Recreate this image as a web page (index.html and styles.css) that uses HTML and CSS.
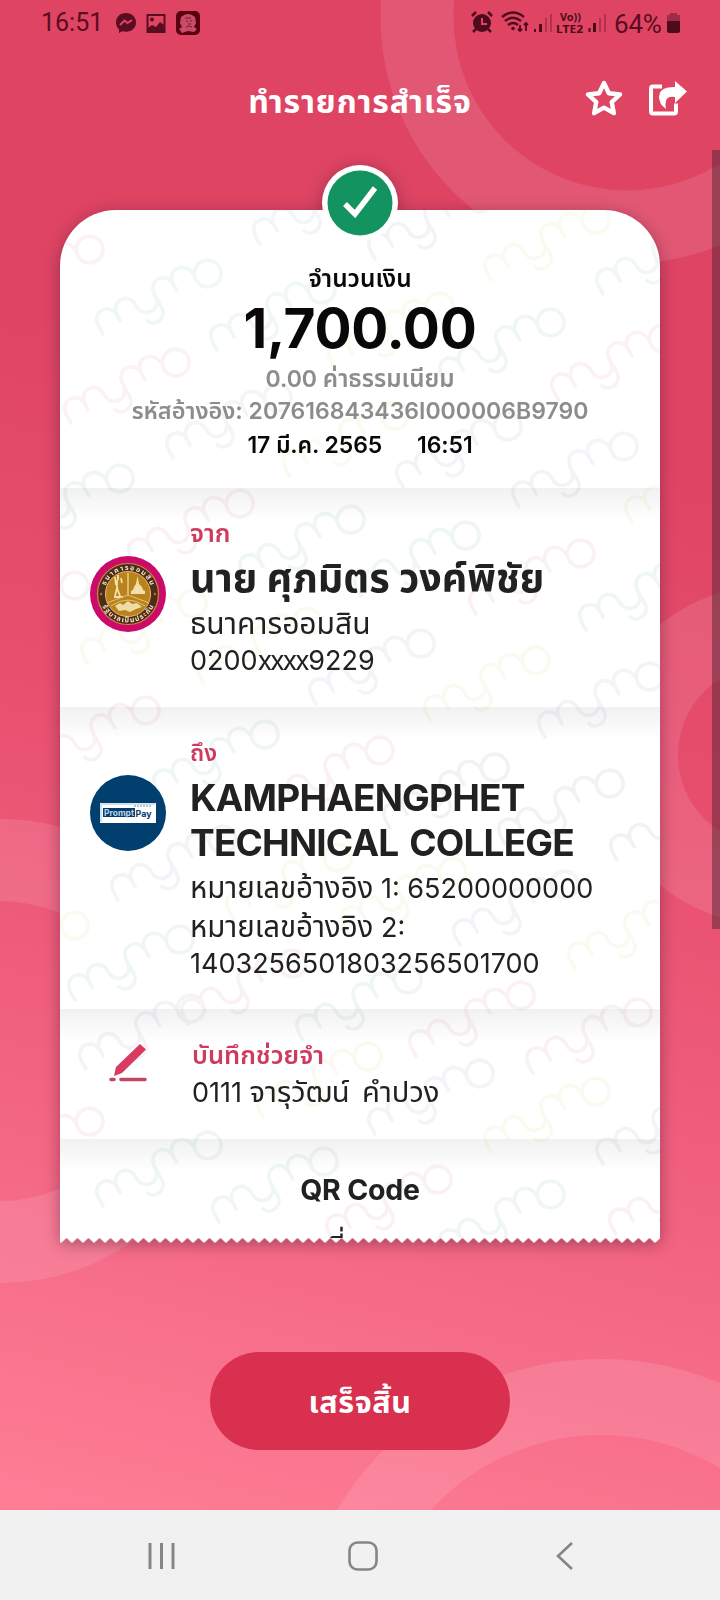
FILE: index.html
```html
<!DOCTYPE html>
<html lang="th">
<head>
<meta charset="utf-8">
<meta name="viewport" content="width=720">
<title>ทำรายการสำเร็จ</title>
<link rel="stylesheet" href="styles.css">
</head>
<body>
<div class="screen">
  <svg class="rings" viewBox="0 0 720 1510" aria-hidden="true">
    <g fill="none" stroke="#fff" stroke-opacity=".11">
      <circle cx="627" cy="17" r="210" stroke-width="73"/>
      <circle cx="768" cy="755" r="129.500" stroke-width="79"/>
      <circle cx="0" cy="1051" r="191" stroke-width="82"/>
      <circle cx="601" cy="1665" r="268" stroke-width="76"/>
    </g>
  </svg>

  <div class="status">
    <span class="clock">16:51</span>
    <svg class="s-left" width="86" height="26" viewBox="0 0 86 26">
      <path d="M11 2C5 2 1 6 1 11.500c0 3 1 5 3 6.800V22l3.400-1.700c1.100.3 2.300.5 3.600.5 6 0 10-4.100 10-9.300S17 2 11 2z" fill="#5a0c20"/>
      <path d="M5 14l4.500-4.500 3 2.500 4.500-3" fill="none" stroke="#df4463" stroke-width="2"/>
      <path d="M32.500 4h17v17h-17z" fill="none" stroke="#5a0c20" stroke-width="2"/>
      <circle cx="37" cy="8.500" r="2" fill="#5a0c20"/>
      <path d="M33 17l4-3 4 2 4-5 4 3v7H33z" fill="#5a0c20"/>
      <rect x="61" y="0" width="24" height="24" rx="5" fill="#5a0010"/>
      <path d="M66 6q7-6 14 0l1 6-2 4 3 2-3 3-6-1-6 2-3-4 3-2-2-4z" fill="#c64d64"/>
      <path d="M70 7h6M71 10h2m2 0h2m-4 3h3m-5 3l3-1 3 1" stroke="#7b1b30" fill="none"/>
    </svg>
    <svg class="s-right" width="140" height="26" viewBox="0 0 140 26">
      <g fill="none" stroke="#4d0b1c" stroke-width="2">
        <circle cx="11" cy="12" r="8" fill="#4d0b1c"/>
        <path d="M1 5l4-4m12 0l4 4M5 18l-3 3m15-3l3 3" stroke-width="2.500"/>
        <path d="M11 7v6h5" stroke="#df4463"/>
        <path d="M31 6q11-9 22 0M34 10q8-6.500 16 0M37 14q5-4 10 0" stroke-width="2.400"/>
        <path d="M49 14v6m-2-2l2 2 2-2m4 2v-8m-2 2l2-2 2 2" stroke-width="1.800"/>
      </g>
      <circle cx="42" cy="17.500" r="1.800" fill="#4d0b1c"/>
      <g fill="#4d0b1c"><path d="M63 18h2v3h-2zM68 13h3v8h-3zM117.500 17h2v4h-2zM122 12h3v9h-3z"/><path d="M74 7h2v14h-2zM79 3h2v18h-2zM128 7h2v14h-2zM133 3h2v18h-2z" opacity=".3"/></g>
      <text class="volte" x="89" y="9.500" textLength="21" lengthAdjust="spacingAndGlyphs">Vo))</text>
      <text class="volte" x="85" y="21.500" textLength="27" lengthAdjust="spacingAndGlyphs">LTE2</text>
    </svg>
    <span class="percent">64%</span>
    <svg class="battery" width="15" height="22" viewBox="0 0 15 22"><path d="M4 0h7v2h3v6H1V2h3z" fill="#a32a44"/><path d="M1 8h13v10q0 2-2 2H3q-2 0-2-2z" fill="#4d0b1c"/></svg>
  </div>

  <header class="header">
    <h1>ทำรายการสำเร็จ</h1>
    <div class="actions">
      <svg width="38" height="37" viewBox="0 0 38 37"><path d="M19 3l4.800 10.200 11.200 1.300-8.300 7.600 2.200 11.100L19 27.700l-9.900 5.500 2.200-11.100L3 14.500l11.200-1.300z" fill="none" stroke="#fff" stroke-width="4.400" stroke-linejoin="round"/></svg>
      <svg width="38" height="36" viewBox="0 0 38 36"><path d="M13 6.500H4q-2 0-2 2v23q0 2 2 2h21q2 0 2-2v-8" fill="none" stroke="#fff" stroke-width="4"/><path d="M26 1l12 10.500-12 11.500v-6q-8-1-9 4-1 3 0 8-7-5-7-12 0-8 9-9.500 4-.6 7-.5z" fill="#fff"/></svg>
    </div>
  </header>

  <main class="slip">
    <svg class="badge" width="76" height="76" viewBox="0 0 76 76">
      <circle cx="38" cy="38" r="38" fill="#fff"/><circle cx="38" cy="38" r="32.500" fill="#13935f"/>
      <path d="M23 39l10 10 20-26" fill="none" stroke="#fff" stroke-width="5.500"/>
    </svg>
    <div class="paper">
      <svg class="marks" viewBox="60 210 600 1028" aria-hidden="true">
        <defs>
          <g id="mark" fill="none" stroke-width="3.400" stroke-linecap="round" transform="translate(3 2) rotate(-29) scale(1.07)">
            <path d="M0 0v-8c0-16 20-16 20 0v5M20-8c0-16 20-16 20 0 0 15 20 15 20 0v13c0 11-15 13-18 4M60-8c0-16 20-16 20 0v6M80-8c0-16 19-16 21 0"/>
            <circle cx="113" cy="-2" r="12.500"/>
          </g>
        </defs>
        <g stroke="#4e9d91">
          <use href="#mark" x="100" y="332"/><use href="#mark" x="214" y="348"/><use href="#mark" x="443" y="381"/><use href="#mark" x="600" y="292"/>
          <use href="#mark" x="12" y="537"/><use href="#mark" x="243" y="578"/><use href="#mark" x="358" y="594"/><use href="#mark" x="583" y="628"/>
          <use href="#mark" x="157" y="793"/><use href="#mark" x="72" y="998"/><use href="#mark" x="300" y="1038"/>
          <use href="#mark" x="100" y="1204"/><use href="#mark" x="216" y="1220"/><use href="#mark" x="443" y="1253"/>
        </g>
        <g stroke="#7188b5">
          <use href="#mark" x="170" y="456"/><use href="#mark" x="257" y="242"/><use href="#mark" x="372" y="257"/><use href="#mark" x="516" y="505"/><use href="#mark" x="313" y="702"/>
          <use href="#mark" x="542" y="735"/><use href="#mark" x="115" y="898"/><use href="#mark" x="457" y="943"/>
          <use href="#mark" x="83" y="1067"/><use href="#mark" x="372" y="1132"/><use href="#mark" x="600" y="1162"/><use href="#mark" x="400" y="485"/>
        </g>
        <g stroke="#c86a82">
          <use href="#mark" x="68" y="421"/><use href="#mark" x="-18" y="308"/><use href="#mark" x="555" y="397"/><use href="#mark" x="132" y="562"/>
          <use href="#mark" x="-33" y="644"/><use href="#mark" x="473" y="612"/><use href="#mark" x="38" y="769"/><use href="#mark" x="272" y="809"/>
          <use href="#mark" x="185" y="1022"/><use href="#mark" x="413" y="1054"/><use href="#mark" x="530" y="1071"/><use href="#mark" x="330" y="1238"/><use href="#mark" x="613" y="1232"/><use href="#mark" x="-18" y="1180"/>
        </g>
        <g stroke="#777">
          <use href="#mark" x="387" y="826"/><use href="#mark" x="502" y="842"/><use href="#mark" x="614" y="858"/>
        </g>
        <g stroke="#dcc95a">
          <use href="#mark" x="488" y="278"/><use href="#mark" x="332" y="365"/><use href="#mark" x="287" y="474"/><use href="#mark" x="85" y="662"/><use href="#mark" x="200" y="680"/>
          <use href="#mark" x="428" y="719"/><use href="#mark" x="629" y="520"/><use href="#mark" x="572" y="966"/><use href="#mark" x="230" y="916"/><use href="#mark" x="345" y="930"/><use href="#mark" x="-33" y="984"/>
          <use href="#mark" x="488" y="1150"/><use href="#mark" x="260" y="1115"/>
        </g>
      </svg>

      <section class="summary">
        <p class="sum-label">จำนวนเงิน</p>
        <p class="amount">1,700.00</p>
        <p class="fee">0.00 <span class="th">ค่าธรรมเนียม</span></p>
        <p class="ref"><span class="th">รหัสอ้างอิง:</span> 207616843436I000006B9790</p>
        <p class="when"><span>17 มี.ค. 2565</span><span class="hour">16:51</span></p>
      </section>

      <section class="party from">
        <svg class="avatar" width="76" height="76" viewBox="0 0 76 76">
          <defs><path id="arc-top" d="M14 38a24 24 0 0 1 48 0"/><path id="arc-bottom" d="M9.500 38a28.500 28.500 0 0 0 57 0"/></defs>
          <circle cx="38" cy="38" r="38" fill="#cb0b69"/>
          <circle cx="38" cy="38" r="30.500" fill="#4f2b1c" stroke="#c98b3c" stroke-width="1.200"/>
          <circle cx="38" cy="38" r="22.500" fill="#b8831c" stroke="#e4bd72" stroke-width="1"/>
          <path d="M38 17v22" stroke="#f0d08a" stroke-width="1.400"/>
          <path d="M28 19v5m-3-3l1 8m5-7l1 5m-5-3v9m-2 7l2-8 3 8M24 41h9" stroke="#f4dfad" stroke-width="1.800" fill="none"/>
          <path d="M47.500 20l1.500 8 3 3 1 3 2 1v3H41v-3l2-1 1-3 2-3z" fill="#f2dfac"/>
          <path d="M17 47l21-8 21 8M21 50q17-12 34 0" stroke="#e6c170" fill="none"/>
          <path d="M25 50l5-3 3 2 5-4 4 3 5-1 5 4-6 2-6 3-5-2-6 1z" fill="#f0dba6"/>
          <path d="M11 36.500l1 1.500-1 1.500-1-1.500zM65 36.500l1 1.500-1 1.500-1-1.500z" fill="#d8a04a"/>
          <text class="seal"><textPath href="#arc-top" startOffset="50%" text-anchor="middle" textLength="58">ธนาคารออมสิน</textPath></text>
          <text class="seal"><textPath href="#arc-bottom" startOffset="50%" text-anchor="middle" textLength="64">รัฐบาลเป็นประกัน</textPath></text>
        </svg>
        <div class="details">
          <p class="label">จาก</p>
          <p class="name thai">นาย ศุภมิตร วงค์พิชัย</p>
          <p class="line bank">ธนาคารออมสิน</p>
          <p class="line account">0200<span class="masked">xxxx</span>9229</p>
        </div>
      </section>

      <section class="party to">
        <svg class="avatar" width="76" height="76" viewBox="0 0 76 76">
          <circle cx="38" cy="38" r="38" fill="#003f6e"/>
          <rect x="10" y="28" width="56" height="20" fill="#fff"/><path d="M11 47V29h54" fill="none" stroke="#9fc3dc"/>
          <rect x="13" y="33" width="32" height="9" fill="#063d70"/>
          <text class="pp light" x="14" y="41" textLength="30" lengthAdjust="spacingAndGlyphs">Prompt</text>
          <text class="pp dark" x="45.500" y="41.500" textLength="16" lengthAdjust="spacingAndGlyphs">Pay</text>
          <path d="M44 31h17" stroke="#678eaa" stroke-dasharray="2 1"/>
        </svg>
        <div class="details">
          <p class="label short">ถึง</p>
          <p class="name">KAMPHAENGPHET TECHNICAL COLLEGE</p>
          <p class="line ref-one"><span class="th">หมายเลขอ้างอิง</span> 1: 65200000000</p>
          <p class="line ref-two"><span class="th">หมายเลขอ้างอิง</span> 2:</p>
          <p class="line ref-num">1403256501803256501700</p>
        </div>
      </section>

      <section class="party memo">
        <svg class="pen" width="38" height="38" viewBox="0 0 38 38"><path d="M31 0l6 5.500-24 23.500-8 3 2-9z" fill="#d93b60"/><path d="M2 35.500h3m7 0h24" stroke="#c24765" stroke-width="3.600" stroke-linecap="round"/></svg>
        <div class="details">
          <p class="label">บันทึกช่วยจำ</p>
          <p class="line note">0111 <span class="th">จารุวัฒน์&nbsp; คำปวง</span></p>
        </div>
      </section>

      <section class="qr">
        <h2>QR Code</h2>
        <p>ที่</p>
      </section>
    </div>
    <svg class="teeth" width="600" height="5"><defs><pattern id="saw" x="-4.500" width="11" height="5" patternUnits="userSpaceOnUse"><path d="M0 0h11L5.500 5z" fill="#fff"/></pattern></defs><rect width="600" height="5" fill="url(#saw)"/></svg>
  </main>

  <button class="done" type="button">เสร็จสิ้น</button>
  <div class="scrollbar"></div>
</div>

<nav class="navbar">
  <svg width="30" height="30" viewBox="0 0 30 30"><path d="M3 2v26M14.500 2v26M26 2v26" stroke="#858585" stroke-width="3"/></svg>
  <svg width="30" height="30" viewBox="0 0 30 30"><rect x="1.500" y="1.500" width="27" height="27" rx="8" fill="none" stroke="#858585" stroke-width="2.600"/></svg>
  <svg width="30" height="30" viewBox="0 0 30 30"><path d="M23 2L9 15l14 13" fill="none" stroke="#858585" stroke-width="2.600"/></svg>
</nav>
</body>
</html>
```

FILE: styles.css
```css
* { box-sizing: border-box; margin: 0; padding: 0; }
body {
  width: 720px;
  height: 1600px;
  overflow: hidden;
  font-family: Inter, "Noto Sans Thai", "Noto Sans", sans-serif;
  color: #212121;
}
.screen {
  position: relative;
  display: flex;
  flex-direction: column;
  align-items: center;
  height: 1510px;
  background: linear-gradient(194deg, #df4463 0%, #df4463 28%, #e84f6f 50%, #f26482 75%, #ff7e96 100%);
}
.rings { position: absolute; inset: 0; width: 720px; height: 1510px; }

.status {
  position: relative;
  display: flex;
  align-items: center;
  width: 720px;
  height: 46px;
  padding-left: 41px;
  font: 25px/46px Roboto, sans-serif;
  color: #5a0c20;
}
.clock { width: 74px; }
.s-left, .s-right { margin-top: 1px; }
.s-right { margin-left: 270px; overflow: visible; }
.percent { width: 52px; margin: 1px 0 0 3px; font-size: 26px; letter-spacing: -.2px; }
.battery { margin: 2px 0 0; }
.volte { font: bold 10px "Noto Sans", sans-serif; fill: #4d0b1c; }

.header {
  position: relative;
  display: flex;
  justify-content: center;
  width: 720px;
  height: 164px;
  padding-top: 35px;
}
h1 { font-size: 32px; line-height: 42px; font-weight: 700; letter-spacing: .9px; color: #fff; }
.actions { position: absolute; right: 33px; top: 34px; display: flex; gap: 26px; }

.slip {
  position: relative;
  width: 600px;
  filter: drop-shadow(0 3px 8px rgba(70, 20, 50, .45));
}
.badge { position: absolute; left: 262px; top: -45px; z-index: 2; }
.paper {
  position: relative;
  height: 1028px;
  overflow: hidden;
  border-radius: 56px 56px 0 0;
  background: #fff;
}
.marks { position: absolute; inset: 0; width: 600px; height: 1028px; opacity: .085; }
.teeth { display: block; }

section { position: relative; background: linear-gradient(rgba(0, 0, 0, .055), rgba(0, 0, 0, 0) 33px); }
.th { line-height: 0; }
.summary {
  height: 278px;
  padding-top: 54px;
  background: none;
  text-align: center;
  font-weight: 600;
  color: #080808;
}
.sum-label { height: 30px; font-size: 24.400px; line-height: 28px; }
.amount { height: 70px; font-size: 55px; line-height: 68px; font-weight: 700; letter-spacing: -.3px; }
.fee, .ref { font-size: 23px; color: #8c8c8c; }
.fee { line-height: 30px; }
.fee .th { font-size: 1.050em; }
.ref { line-height: 34px; }
.ref .th { font-size: 1.020em; }
.when { display: flex; justify-content: center; gap: 35px; font-size: 23px; line-height: 34px; letter-spacing: -.1px; }

.party { display: flex; padding: 30px 0 0 30px; }
.avatar { flex: none; margin-top: 38px; }
.details { margin-left: 24px; }
.label { font-size: 25.500px; line-height: 30px; height: 30px; font-weight: 600; color: #cf3b60; }
.short { font-size: 23px; line-height: 32px; }
.name { font-size: 37px; line-height: 45px; font-weight: 700; letter-spacing: -.820px; word-spacing: 3px; }
.line { font-size: 27px; white-space: nowrap; }
.line .th { font-size: 1.090em; }
.from { height: 219px; }
.thai { font-size: 39.500px; line-height: 60px; white-space: nowrap; letter-spacing: 0; word-spacing: 0; }
.bank { font-size: 30px; line-height: 31px; }
.account { line-height: 44px; }
.masked { letter-spacing: -2.300px; margin-right: 1px; }
.to { height: 302px; }
.to .name { width: 400px; margin-top: 8px; }
.ref-one { line-height: 47px; }
.ref-two { line-height: 32px; }
.ref-num { line-height: 39px; }
.memo { height: 130px; padding: 31px 0 0 49px; }
.pen { flex: none; margin-top: 4px; }
.memo .details { margin-left: 45px; }
.note { line-height: 45px; }
.note .th { font-size: 1.080em; word-spacing: -2px; }
.qr { height: 99px; padding-top: 33px; text-align: center; }
.qr h2 { font-size: 28.500px; line-height: 36px; font-weight: 700; letter-spacing: -.2px; }
.qr p { margin: 13px 47px 0 0; font-size: 29px; line-height: 50px; }

.seal { font: bold 7px "Noto Sans Thai", sans-serif; fill: #f6e6c2; }
.pp { font: bold 9px Inter, sans-serif; }
.light { fill: #b9d6e8; }
.dark { fill: #063d70; }

.done {
  position: relative;
  width: 300px;
  height: 98px;
  margin-top: 109px;
  padding-top: 6px;
  border: 0;
  border-radius: 49px;
  background: #d93050;
  color: #fff;
  font-family: inherit;
  font-size: 30.500px;
  font-weight: 700;
  letter-spacing: .6px;
}
.scrollbar { position: absolute; right: 0; top: 150px; width: 8px; height: 779px; background: rgba(75, 35, 50, .48); }

.navbar {
  display: flex;
  justify-content: space-between;
  align-items: center;
  height: 90px;
  padding: 2px 141px 0 147px;
  background: #f1f1f1;
}
```
